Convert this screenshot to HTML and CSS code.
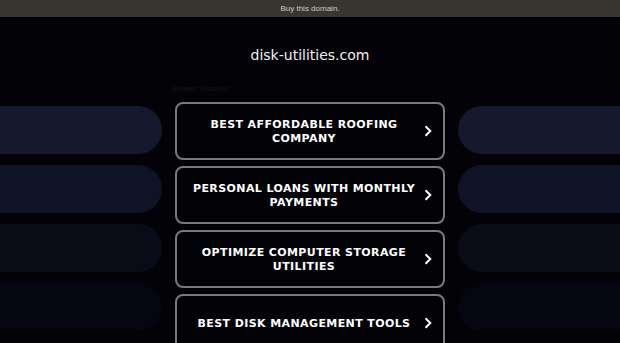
FILE: index.html
```html
<!DOCTYPE html>
<html lang="en">
<head>
    <meta charset="UTF-8">
    <meta name="viewport" content="width=device-width, initial-scale=1.0">
    <title>disk-utilities.com</title>
    <link rel="stylesheet" href="styles.css">
</head>
<body>
    <div class="top-bar">Buy this domain.</div>

    <h1 class="domain">disk-utilities.com</h1>

    <div class="layout">
        <div class="pills">
            <div class="pill pill-1"></div>
            <div class="pill pill-2"></div>
            <div class="pill pill-3"></div>
            <div class="pill pill-4"></div>
        </div>

        <div class="searches">
            <div class="searches-title">Related Searches</div>
            <a class="search-link" href="#">
                <span class="search-text">Best Affordable Roofing Company</span>
                <svg class="chevron" viewBox="0 0 8 12"><path d="M1.5 1.2 L6.3 6 L1.5 10.8" /></svg>
            </a>
            <a class="search-link" href="#">
                <span class="search-text">Personal Loans With Monthly Payments</span>
                <svg class="chevron" viewBox="0 0 8 12"><path d="M1.5 1.2 L6.3 6 L1.5 10.8" /></svg>
            </a>
            <a class="search-link" href="#">
                <span class="search-text">Optimize Computer Storage Utilities</span>
                <svg class="chevron" viewBox="0 0 8 12"><path d="M1.5 1.2 L6.3 6 L1.5 10.8" /></svg>
            </a>
            <a class="search-link" href="#">
                <span class="search-text">Best Disk Management Tools</span>
                <svg class="chevron" viewBox="0 0 8 12"><path d="M1.5 1.2 L6.3 6 L1.5 10.8" /></svg>
            </a>
        </div>

        <div class="pills pills-right">
            <div class="pill pill-1"></div>
            <div class="pill pill-2"></div>
            <div class="pill pill-3"></div>
            <div class="pill pill-4"></div>
        </div>
    </div>
</body>
</html>
```

FILE: styles.css
```css
html, body {
    height: 100%;
}
body {
    margin: 0;
    background-color: #030307;
    font-family: "DejaVu Sans", Verdana, sans-serif;
    color: #fff;
    overflow: hidden;
}
.top-bar {
    height: 17px;
    line-height: 17px;
    background-color: #39362f;
    color: #cfcdc8;
    font-family: "Liberation Sans", Arial, sans-serif;
    font-size: 8px;
    text-align: center;
}
.domain {
    margin: 0;
    padding-top: 28px;
    height: 39px;
    font-family: "DejaVu Sans", sans-serif;
    font-weight: normal;
    font-size: 14px;
    line-height: 20px;
    color: #f0f0f2;
    text-align: center;
}
.layout {
    display: grid;
    grid-template-columns: 162px 270px 162px;
    column-gap: 13px;
}
.pills {
    display: flex;
    flex-direction: column;
    gap: 11px;
    padding-top: 22px;
}
.pill {
    height: 48px;
    border-radius: 0 24px 24px 0;
}
.pills-right .pill {
    border-radius: 24px 0 0 24px;
}
.pill-1 { background-color: #14192d; }
.pill-2 { background-color: #0f1326; }
.pill-3 { background-color: #090b17; }
.pill-4 { background-color: #05060f; }
.searches {
    display: flex;
    flex-direction: column;
    gap: 6px;
}
.searches-title {
    font-family: "Liberation Sans", Arial, sans-serif;
    font-size: 7px;
    line-height: 10px;
    height: 12px;
    color: #14141e;
    margin-left: -2px;
}
.search-link {
    display: flex;
    align-items: center;
    height: 54px;
    border: 2px solid #7a7a7e;
    border-radius: 8px;
    color: #fff;
    text-decoration: none;
    padding: 0 11px 0 13px;
}
.search-text {
    flex: 1;
    text-align: center;
    text-transform: uppercase;
    font-weight: bold;
    font-size: 11px;
    line-height: 14px;
    letter-spacing: 0.4px;
    padding-top: 1px;
}
.chevron {
    width: 8px;
    height: 12px;
    margin-left: 6px;
    fill: none;
    stroke: #fff;
    stroke-width: 2;
}
```
